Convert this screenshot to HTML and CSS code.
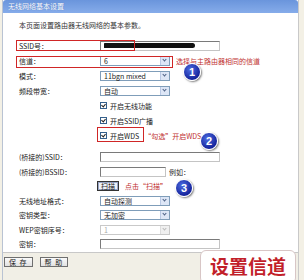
FILE: index.html
```html
<!DOCTYPE html>
<html lang="zh-CN">
<head>
	<meta charset="UTF-8">
	<title>无线网络基本设置</title>
	<link rel="stylesheet" href="styles.css">
</head>
<body>
	<div class="frame">
		<div class="title">无线网络基本设置</div>
		<div class="panel">
			<p class="intro">本页面设置路由器无线网络的基本参数。</p>

			<div class="row">
				<span class="label">SSID号：</span>
				<span class="input wide"><i class="scribble"></i></span>
			</div>
			<div class="row">
				<span class="label">信道：</span>
				<span class="select">6<b class="arrow"></b></span>
				<span class="note">选择与主路由器相同的信道</span>
			</div>
			<div class="row">
				<span class="label">模式：</span>
				<span class="select">11bgn mixed<b class="arrow"></b></span>
			</div>
			<div class="row">
				<span class="label">频段带宽：</span>
				<span class="select">自动<b class="arrow"></b></span>
			</div>
			<div class="row">
				<span class="label"></span>
				<span class="check"></span><span>开启无线功能</span>
			</div>
			<div class="row">
				<span class="label"></span>
				<span class="check"></span><span>开启SSID广播</span>
			</div>
			<div class="row">
				<span class="label"></span>
				<span class="check"></span><span>开启WDS</span>
				<span class="note tip">“勾选”开启WDS</span>
			</div>

			<div class="group">
				<div class="row sm">
					<span class="label">(桥接的)SSID：</span>
					<span class="input wide"></span>
				</div>
				<div class="row sm">
					<span class="label">(桥接的)BSSID：</span>
					<span class="input short"></span>
					<span class="hint">例如：</span>
				</div>
				<div class="row sm">
					<span class="label"></span>
					<span class="scan">扫描</span>
					<span class="note">点击“扫描”</span>
				</div>
				<div class="row sm">
					<span class="label">无线地址格式：</span>
					<span class="select">自动探测<b class="arrow"></b></span>
				</div>
				<div class="row sm">
					<span class="label">密钥类型：</span>
					<span class="select">无加密<b class="arrow"></b></span>
				</div>
				<div class="row sm">
					<span class="label">WEP密钥序号：</span>
					<span class="select off">1<b class="arrow"></b></span>
				</div>
				<div class="row sm">
					<span class="label">密钥：</span>
					<span class="input wide"></span>
				</div>
			</div>
		</div>
		<div class="footer">
			<span class="btn">保 存</span>
			<span class="btn">帮 助</span>
		</div>
	</div>

	<div class="mark mark-ssid"></div>
	<div class="mark mark-channel"></div>
	<div class="mark mark-wds"></div>

	<div class="step step-1">1</div>
	<div class="step step-2">2</div>
	<div class="step step-3">3</div>

	<div class="caption">设置信道</div>
</body>
</html>
```

FILE: styles.css
```css
body{
	margin: 0;
	width: 304px;
	height: 280px;
	overflow: hidden;
	position: relative;
	background: #f3f0e5;
	font-family: "Noto Sans CJK SC", "Liberation Sans", sans-serif;
	font-size: 7px;
	color: #222;
}
.frame{
	margin-left: 2px;
	width: 295px;
	height: 280px;
	background: #fff;
	border-left: 1px solid #b9c3d3;
	border-right: 1px solid #c9c9c9;
	display: flex;
	flex-direction: column;
}
.title{
	height: 13px;
	line-height: 13px;
	padding-left: 5px;
	color: #fff;
	background: linear-gradient(#6a95dc, #86acea);
	border-radius: 3px 3px 0 0;
	text-shadow: 0 0 1px #4a6fb8;
}
.panel{
	padding-left: 16px;
}
.intro{
	margin: 5px 0 6px;
	height: 14px;
	line-height: 14px;
	color: #333;
}
.row{
	display: flex;
	align-items: center;
	height: 15px;
	white-space: nowrap;
}
.row.sm{
	height: 14.5px;
}
.group{
	margin-top: 7px;
}
.label{
	width: 81px;
	flex: none;
}
.input{
	height: 10px;
	box-sizing: border-box;
	border: 1px solid #7a7a7a;
	border-right-color: #c4c4c4;
	border-bottom-color: #c4c4c4;
	background: #fff;
	position: relative;
}
.wide{
	width: 120px;
}
.short{
	width: 66px;
}
.scribble{
	position: absolute;
	left: 3px;
	top: 1px;
	width: 91px;
	height: 5px;
	background: #111;
	border-radius: 1px 4px 4px 1px;
	filter: blur(0.4px);
}
.select{
	width: 70px;
	height: 10px;
	line-height: 8px;
	box-sizing: border-box;
	border: 1px solid #7f9db9;
	padding-left: 3px;
	background: #fff;
	position: relative;
}
.arrow{
	position: absolute;
	right: 0;
	top: 0;
	width: 8px;
	height: 8px;
	background: #dde6f6;
	border-left: 1px solid #b9c8e4;
}
.arrow::after{
	content: "";
	position: absolute;
	left: 2px;
	top: 1px;
	width: 2px;
	height: 2px;
	border-right: 1px solid #4d6185;
	border-bottom: 1px solid #4d6185;
	transform: rotate(45deg);
}
.select.off{
	border-color: #c9c9c9;
	color: #aaa;
}
.select.off .arrow{
	background: #f0f0f0;
	border-left-color: #ddd;
}
.select.off .arrow::after{
	border-color: #bbb;
}
.note{
	color: #c03030;
	margin-left: 6px;
}
.tip{
	margin-left: 5px;
}
.hint{
	margin-left: 3px;
}
.check{
	width: 7px;
	height: 7px;
	box-sizing: border-box;
	border: 1px solid #35608c;
	background: #fff;
	margin-right: 3px;
	position: relative;
}
.check::after{
	content: "";
	position: absolute;
	left: 1px;
	top: 0;
	width: 2px;
	height: 3px;
	border-right: 1px solid #222;
	border-bottom: 1px solid #222;
	transform: rotate(40deg);
}
.scan{
	margin-left: -3px;
	padding: 0 3px;
	height: 10px;
	line-height: 8px;
	box-sizing: border-box;
	border: 1px solid #333;
	background: #eef0f6;
	box-shadow: inset 0 0 0 1px #98a6c8;
}
.footer{
	margin-top: auto;
	height: 23px;
	border-top: 1px solid #c8c8c8;
	background: #f1efe6;
	padding: 4px 0 0 1px;
	display: flex;
	align-items: flex-start;
	gap: 7px;
}
.btn{
	height: 10px;
	line-height: 8px;
	box-sizing: border-box;
	padding: 0 4px;
	border: 1px solid #6f6f6f;
	background: linear-gradient(#fafafa, #e2e2e2);
	letter-spacing: 1px;
}
.mark{
	position: absolute;
	border: 1px solid #d02626;
}
.mark-ssid{
	left: 16px;
	top: 40px;
	width: 117px;
	height: 9px;
}
.mark-channel{
	left: 16px;
	top: 56px;
	width: 155px;
	height: 10px;
}
.mark-wds{
	left: 97px;
	top: 127px;
	width: 45px;
	height: 13px;
}
.step{
	position: absolute;
	width: 16px;
	height: 16px;
	line-height: 16px;
	border-radius: 50%;
	border: 1.5px solid #fff;
	background: radial-gradient(circle at 40% 35%, #4d6de2, #14239c 70%);
	box-shadow: 1px 1px 2px #7a7a7a;
	color: #fff;
	font-family: "Liberation Sans", sans-serif;
	font-weight: bold;
	font-size: 11px;
	text-align: center;
}
.step-1{
	left: 183px;
	top: 63px;
}
.step-2{
	left: 200px;
	top: 132px;
}
.step-3{
	left: 175px;
	top: 179px;
}
.caption{
	position: absolute;
	left: 200px;
	top: 250px;
	width: 96px;
	height: 34px;
	line-height: 30px;
	box-sizing: border-box;
	border: 1px solid #d8c6c6;
	border-radius: 6px;
	background: #fff;
	color: #c21f2a;
	font-size: 19px;
	font-weight: bold;
	text-align: center;
}
```
